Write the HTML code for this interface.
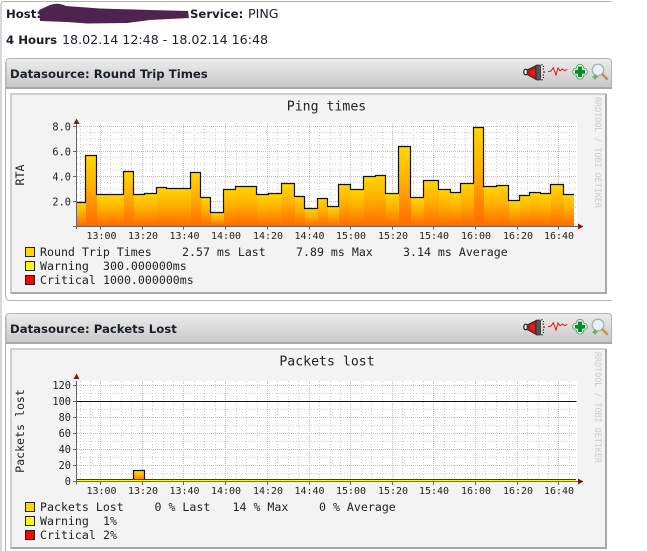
<!DOCTYPE html>
<html><head><meta charset="utf-8"><style>
html,body{margin:0;padding:0;background:#fff;width:647px;height:551px;overflow:hidden}
svg{position:absolute;left:0;top:0}
.m{font-family:"DejaVu Sans Mono","Liberation Mono",monospace;fill:#222}
.h{font-family:"DejaVu Sans","Liberation Sans",sans-serif;font-size:12.65px;fill:#1b1f2a}
.b{font-weight:bold;font-size:11.7px}
.t{font-size:10px}.l{font-size:11.6px}.a{font-size:10.3px}
.w{font-size:8.4px;fill:#ccc}
</style></head><body>
<svg width="647" height="551" viewBox="0 0 647 551" xmlns="http://www.w3.org/2000/svg">
<defs>
<linearGradient id="hd" x1="0" y1="0" x2="0" y2="1"><stop offset="0" stop-color="#ededed"/><stop offset="1" stop-color="#c6c6c6"/></linearGradient>
<linearGradient id="bg" x1="0" y1="0" x2="0" y2="1"><stop offset="0" stop-color="#ffd800"/><stop offset="0.45" stop-color="#ffb000"/><stop offset="1" stop-color="#ff6a00"/></linearGradient>
<g id="icons">
 <ellipse cx="525.800" cy="72" rx="2" ry="2.800" fill="#fff" stroke="#111" stroke-width="1.200"/>
 <path d="M527 70 L536 65.500 V79.500 L527 74.500 Z" fill="#b8141c" stroke="#222" stroke-width=".7"/>
 <path d="M530 71 L535 69 V76 L530 74 Z" fill="#e02028"/>
 <rect x="536" y="65" width="4.500" height="15" rx="1" fill="#555" stroke="#222" stroke-width=".7"/>
 <g fill="#111"><rect x="541.500" y="64" width="1" height="1.500"/><rect x="543" y="66" width="1" height="1"/><rect x="542.500" y="68.500" width="1.500" height="1"/><rect x="543.500" y="71" width="1" height="2"/><rect x="542.500" y="74.500" width="1.500" height="1"/><rect x="543" y="77" width="1" height="1"/><rect x="541.500" y="79" width="1" height="1.500"/></g>
 <path d="M548 71.700 L551 71 L553.300 67.700 L556 75 L558 68 L560 70.700 L562.700 69 L564.700 70.700 L567.300 69.300" stroke="#f01010" stroke-width="1" fill="none"/>
 <path d="M580 68V75.500M576.300 71.700H583.700" stroke="#3c9a50" stroke-width="8" stroke-linecap="round" fill="none"/>
 <path d="M580 68V75.500M576.300 71.700H583.700" stroke="#f4fff4" stroke-width="6.400" stroke-linecap="round" fill="none"/>
 <path d="M580 66.500V77M574.800 71.700H585.200" stroke="#0b8a2a" stroke-width="4" fill="none"/>
 <circle cx="598" cy="70" r="5.800" fill="#eaf0f3" stroke="#a9b4b8" stroke-width="1.400"/>
 <path d="M602.500 74.500 L607 79" stroke="#c8904a" stroke-width="2.600" stroke-linecap="round"/>
 <path d="M595 74.500 V79.500 M592.500 77 H597.500" stroke="#5cb84a" stroke-width="1.800"/>
</g>
</defs>

<!-- outer frame -->
<path d="M612 1.500 H4 Q1 1.500 1 4.500 V551" fill="none" stroke="#b0b0b0" stroke-width="1"/>
<path d="M5.500 62 V295 Q5.500 300.500 10 300.500 H612" fill="none" stroke="#b4b4b4" stroke-width="1"/>
<path d="M5.500 317 V551" fill="none" stroke="#b4b4b4" stroke-width="1"/>

<!-- top text -->
<text class="h b" x="6" y="18">Host:</text>
<path d="M39 10 L50 5 Q58 2 66 6 L100 8.500 L150 10 L188 11 L189 18 L150 20 L127 23 L87 23.500 L67 22 L40 21 Z" fill="#4f2350"/>
<text class="h b" x="190" y="18">Service:</text><text class="h" x="248" y="18">PING</text>
<text class="h b" x="6" y="44">4 Hours</text><text class="h" x="62" y="44">18.02.14 12:48 - 18.02.14 16:48</text>

<!-- header 1 -->
<path d="M6 88.500 V62 Q6 58.500 10 58.500 H608 Q611.500 58.500 611.500 62 V88.500 Z" fill="url(#hd)" stroke="#b4b4b4" stroke-width="1"/>
<rect x="6" y="87" width="606" height="2" fill="#a8a8a8"/>
<text class="h b" x="10" y="78">Datasource: Round Trip Times</text>
<use href="#icons"/>

<!-- chart 1 -->
<rect x="10" y="93" width="597" height="201" fill="#f3f3f3"/>
<path d="M11 294 V94 H606" fill="none" stroke="#cfcfcf" stroke-width="2"/>
<path d="M11 293 H606 V94" fill="none" stroke="#a8a8a8" stroke-width="2"/>
<rect x="77" y="122" width="500" height="104" fill="#fff"/>
<g fill="none" stroke-width="1">
<path stroke="#cccccc" stroke-dasharray="1 2" d="M77 132.500H577M77 139H577M77 145H577M77 157.500H577M77 164H577M77 170H577M77 182.500H577M77 189H577M77 195H577M77 207.500H577M77 214H577M77 220H577"/>
<path stroke="#cccccc" stroke-dasharray="1 2" d="M80.500 123V226M90.500 123V226M110.500 123V226M121.500 123V226M131.500 123V226M152.500 123V226M163.500 123V226M173.500 123V226M194.500 123V226M204.500 123V226M215.500 123V226M236.500 123V226M246.500 123V226M257.500 123V226M277.500 123V226M288.500 123V226M298.500 123V226M319.500 123V226M330.500 123V226M340.500 123V226M361.500 123V226M371.500 123V226M382.500 123V226M402.500 123V226M413.500 123V226M423.500 123V226M444.500 123V226M454.500 123V226M465.500 123V226M485.500 123V226M496.500 123V226M506.500 123V226M527.500 123V226M538.500 123V226M548.500 123V226M569.500 123V226"/>
<path stroke="#f2aaaa" stroke-dasharray="1 1" d="M77 126.500H577M77 151.500H577M77 176.500H577M77 201.500H577"/>
<path stroke="#f2aaaa" stroke-dasharray="1 1" d="M100.500 123V226M142.500 123V226M183.500 123V226M225.500 123V226M267.500 123V226M309.500 123V226M350.500 123V226M392.500 123V226M433.500 123V226M475.500 123V226M517.500 123V226M558.500 123V226"/>
</g>
<g fill="url(#bg)">
<rect x="77" y="202" width="9" height="24"/><rect x="86" y="155" width="11" height="71"/><rect x="97" y="194" width="27" height="32"/><rect x="124" y="171" width="10" height="55"/><rect x="134" y="194" width="11" height="32"/><rect x="145" y="193" width="12" height="33"/><rect x="157" y="187" width="10" height="39"/><rect x="167" y="188" width="24" height="38"/><rect x="191" y="172" width="10" height="54"/><rect x="201" y="197" width="10" height="29"/><rect x="211" y="212" width="13" height="14"/><rect x="224" y="189" width="12" height="37"/><rect x="236" y="186" width="21" height="40"/><rect x="257" y="194" width="12" height="32"/><rect x="269" y="193" width="13" height="33"/><rect x="282" y="183" width="13" height="43"/><rect x="295" y="196" width="10" height="30"/><rect x="305" y="208" width="13" height="18"/><rect x="318" y="198" width="10" height="28"/><rect x="328" y="206" width="11" height="20"/><rect x="339" y="184" width="12" height="42"/><rect x="351" y="189" width="13" height="37"/><rect x="364" y="176" width="12" height="50"/><rect x="376" y="175" width="10" height="51"/><rect x="386" y="193" width="13" height="33"/><rect x="399" y="146" width="12" height="80"/><rect x="411" y="197" width="13" height="29"/><rect x="424" y="180" width="15" height="46"/><rect x="439" y="189" width="12" height="37"/><rect x="451" y="192" width="10" height="34"/><rect x="461" y="183" width="13" height="43"/><rect x="474" y="127" width="10" height="99"/><rect x="484" y="186" width="13" height="40"/><rect x="497" y="185" width="12" height="41"/><rect x="509" y="200" width="11" height="26"/><rect x="520" y="195" width="10" height="31"/><rect x="530" y="192" width="11" height="34"/><rect x="541" y="193" width="10" height="33"/><rect x="551" y="184" width="13" height="42"/><rect x="564" y="194" width="10" height="32"/>
</g>
<path fill="none" stroke="#111" stroke-width="1.200" d="M76.500 202.500H85.500V155.500H96.500V194.500H123.500V171.500H133.500V194.500H144.500V193.500H156.500V187.500H166.500V188.500H190.500V172.500H200.500V197.500H210.500V212.500H223.500V189.500H235.500V186.500H256.500V194.500H268.500V193.500H281.500V183.500H294.500V196.500H304.500V208.500H317.500V198.500H327.500V206.500H338.500V184.500H350.500V189.500H363.500V176.500H375.500V175.500H385.500V193.500H398.500V146.500H410.500V197.500H423.500V180.500H438.500V189.500H450.500V192.500H460.500V183.500H473.500V127.500H483.500V186.500H496.500V185.500H508.500V200.500H519.500V195.500H529.500V192.500H540.500V193.500H550.500V184.500H563.500V194.500H574"/>
<path fill="none" stroke="#666" stroke-width="1" d="M76.500 122V229M73 226.500H578M73 201.500H76M73 176.500H76M73 151.500H76M73 126.500H76M100.500 226V229.500M142.500 226V229.500M183.500 226V229.500M225.500 226V229.500M267.500 226V229.500M309.500 226V229.500M350.500 226V229.500M392.500 226V229.500M433.500 226V229.500M475.500 226V229.500M517.500 226V229.500M558.500 226V229.500"/>
<path d="M73.500 124 L76.500 118.500 L79.500 124 Z M578 223.500 L583.500 226.500 L578 229.500 Z" fill="#7f1a1a"/>
<g class="m a" text-anchor="end"><text x="71" y="130.500">8.0</text><text x="71" y="155.500">6.0</text><text x="71" y="180.500">4.0</text><text x="71" y="205.500">2.0</text></g>
<g class="m t" text-anchor="middle"><text x="101.500" y="239">13:00</text><text x="143" y="239">13:20</text><text x="184.500" y="239">13:40</text><text x="226" y="239">14:00</text><text x="268" y="239">14:20</text><text x="309.500" y="239">14:40</text><text x="351" y="239">15:00</text><text x="393" y="239">15:20</text><text x="434" y="239">15:40</text><text x="476" y="239">16:00</text><text x="518" y="239">16:20</text><text x="559" y="239">16:40</text></g>
<text class="m" font-size="13.200" x="326.500" y="110.500" text-anchor="middle">Ping times</text>
<text class="m l" transform="translate(24,175) rotate(-90)" text-anchor="middle">RTA</text>
<text class="m w" transform="translate(595,97) rotate(90)">RRDTOOL / TOBI OETIKER</text>
<rect x="25.500" y="247.500" width="9" height="9" fill="#ffd800" stroke="#222"/>
<rect x="25.500" y="261.500" width="9" height="9" fill="#ffff00" stroke="#222"/>
<rect x="25.500" y="275.500" width="9" height="9" fill="#ff0000" stroke="#222"/>
<g class="m l">
<text x="40" y="256">Round Trip Times</text><text x="182" y="256">2.57 ms Last</text><text x="296" y="256">7.89 ms Max</text><text x="403" y="256">3.14 ms Average</text>
<text x="40" y="270">Warning</text><text x="103" y="270">300.000000ms</text>
<text x="40" y="284">Critical</text><text x="103" y="284">1000.000000ms</text>
</g>

<!-- header 2 -->
<path d="M6 343.500 V317 Q6 313.500 10 313.500 H608 Q611.500 313.500 611.500 317 V343.500 Z" fill="url(#hd)" stroke="#b4b4b4" stroke-width="1"/>
<rect x="6" y="342" width="606" height="2" fill="#a8a8a8"/>
<text class="h b" x="10" y="333">Datasource: Packets Lost</text>
<use href="#icons" y="255"/>

<!-- chart 2 -->
<rect x="10" y="348" width="597" height="201" fill="#f3f3f3"/>
<path d="M11 549 V349 H606" fill="none" stroke="#cfcfcf" stroke-width="2"/>
<path d="M11 548 H606 V349" fill="none" stroke="#a8a8a8" stroke-width="2"/>
<rect x="77" y="381" width="500" height="100" fill="#fff"/>
<g fill="none" stroke-width="1">
<path stroke="#cccccc" stroke-dasharray="1 2" d="M77 393.500H577M77 409.500H577M77 425.500H577M77 441.500H577M77 457.500H577M77 473.500H577"/>
<path stroke="#cccccc" stroke-dasharray="1 2" d="M80.500 381V481M90.500 381V481M110.500 381V481M121.500 381V481M131.500 381V481M152.500 381V481M163.500 381V481M173.500 381V481M194.500 381V481M204.500 381V481M215.500 381V481M236.500 381V481M246.500 381V481M257.500 381V481M277.500 381V481M288.500 381V481M298.500 381V481M319.500 381V481M330.500 381V481M340.500 381V481M361.500 381V481M371.500 381V481M382.500 381V481M402.500 381V481M413.500 381V481M423.500 381V481M444.500 381V481M454.500 381V481M465.500 381V481M485.500 381V481M496.500 381V481M506.500 381V481M527.500 381V481M538.500 381V481M548.500 381V481M569.500 381V481"/>
<path stroke="#f2aaaa" stroke-dasharray="1 1" d="M77 385.500H577M77 417.500H577M77 433.500H577M77 449.500H577M77 465.500H577"/>
<path stroke="#f2aaaa" stroke-dasharray="1 1" d="M100.500 381V481M142.500 381V481M183.500 381V481M225.500 381V481M267.500 381V481M309.500 381V481M350.500 381V481M392.500 381V481M433.500 381V481M475.500 381V481M517.500 381V481M558.500 381V481"/>
</g>
<path d="M77 401.500H576.500" stroke="#111" stroke-width="1"/>
<rect x="134" y="471" width="10.500" height="10" fill="url(#bg)"/>
<path d="M133.500 481V470.500H144.500V481" fill="none" stroke="#111" stroke-width="1.200"/>
<rect x="77" y="479" width="499" height="1" fill="#c00000"/>
<rect x="77" y="480" width="499" height="1.500" fill="#ffff00"/>
<path fill="none" stroke="#666" stroke-width="1" d="M76.500 381V484.500M73 481.500H578M73 465.500H76M73 449.500H76M73 433.500H76M73 417.500H76M73 401.500H76M73 385.500H76M100.500 481V485M142.500 481V485M183.500 481V485M225.500 481V485M267.500 481V485M309.500 481V485M350.500 481V485M392.500 481V485M433.500 481V485M475.500 481V485M517.500 481V485M558.500 481V485"/>
<path d="M73.500 379 L76.500 373.500 L79.500 379 Z M578 478.500 L583.500 481.500 L578 484.500 Z" fill="#7f1a1a"/>
<g class="m a" text-anchor="end"><text x="71" y="389">120</text><text x="71" y="405">100</text><text x="71" y="421">80</text><text x="71" y="437">60</text><text x="71" y="453">40</text><text x="71" y="469">20</text><text x="71" y="485">0</text></g>
<g class="m t" text-anchor="middle"><text x="101.500" y="494">13:00</text><text x="143" y="494">13:20</text><text x="184.500" y="494">13:40</text><text x="226" y="494">14:00</text><text x="268" y="494">14:20</text><text x="309.500" y="494">14:40</text><text x="351" y="494">15:00</text><text x="393" y="494">15:20</text><text x="434" y="494">15:40</text><text x="476" y="494">16:00</text><text x="518" y="494">16:20</text><text x="559" y="494">16:40</text></g>
<text class="m" font-size="13.200" x="327" y="365.500" text-anchor="middle">Packets lost</text>
<text class="m l" transform="translate(24,431) rotate(-90)" text-anchor="middle">Packets lost</text>
<text class="m w" transform="translate(595,352) rotate(90)">RRDTOOL / TOBI OETIKER</text>
<rect x="25.500" y="502.500" width="9" height="9" fill="#ffd800" stroke="#222"/>
<rect x="25.500" y="516.500" width="9" height="9" fill="#ffff00" stroke="#222"/>
<rect x="25.500" y="530.500" width="9" height="9" fill="#ff0000" stroke="#222"/>
<g class="m l">
<text x="40" y="511">Packets Lost</text><text x="154.500" y="511">0 % Last</text><text x="232.500" y="511">14 % Max</text><text x="319" y="511">0 % Average</text>
<text x="40" y="525">Warning</text><text x="103" y="525">1%</text>
<text x="40" y="539">Critical</text><text x="103" y="539">2%</text>
</g>
</svg>
</body></html>
